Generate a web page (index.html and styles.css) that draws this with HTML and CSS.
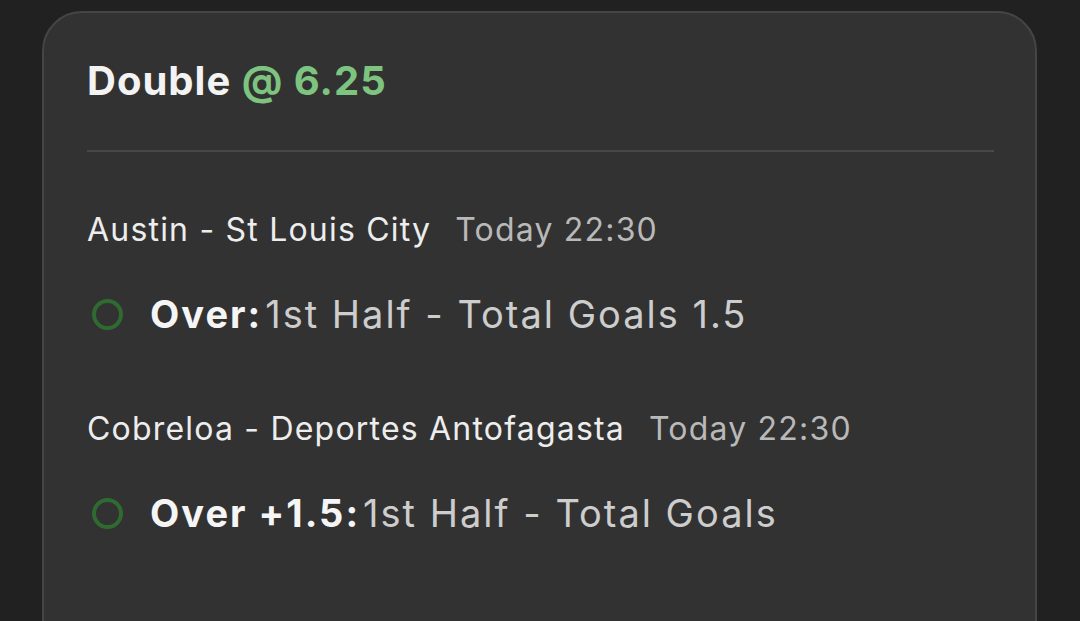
FILE: index.html
```html
<!DOCTYPE html>
<html>
<head>
<meta charset="utf-8">
<link rel="stylesheet" href="styles.css">
</head>
<body>
<div class="card">
  <h1 class="title">Double <span class="odds">@ 6.25</span></h1>
  <div class="divider"></div>
  <div class="leg">
    <div class="match"><span class="teams">Austin - St Louis City</span><span class="time">Today 22:30</span></div>
    <div class="pick"><span class="dot"></span><span class="sel">Over:</span><span class="market">1st Half - Total Goals 1.5</span></div>
  </div>
  <div class="leg">
    <div class="match"><span class="teams">Cobreloa - Deportes Antofagasta</span><span class="time">Today 22:30</span></div>
    <div class="pick"><span class="dot"></span><span class="sel">Over +1.5:</span><span class="market">1st Half - Total Goals</span></div>
  </div>
</div>
</body>
</html>
```
FILE: styles.css
```css
html, body {
  margin: 0;
  background: #212121;
  font-family: Inter, "Noto Sans", sans-serif;
}
body {
  padding: 11px 0 0 42px;
  overflow: hidden;
}
.card {
  width: 995px;
  height: 700px;
  box-sizing: border-box;
  background: #323232;
  border: 2px solid #454545;
  border-radius: 40px;
  padding: 44px 41px 0 43px;
}
.title {
  margin: 0;
  font-size: 40px;
  line-height: 48px;
  font-weight: 700;
  letter-spacing: 1px;
  color: #f3f3f3;
}
.odds {
  color: #7cc47f;
}
.divider {
  height: 2px;
  background: #484848;
  margin-top: 45px;
}
.leg {
  display: flex;
  flex-direction: column;
}
.match {
  display: flex;
  gap: 24px;
  font-size: 32px;
  line-height: 36px;
  letter-spacing: 1.2px;
  margin-top: 60px;
}
.leg + .leg .match {
  margin-top: 75px;
}
.teams {
  color: #ededed;
}
.time {
  color: #b9b9b9;
  letter-spacing: 1.2px;
}
.pick {
  display: flex;
  align-items: center;
  margin-top: 44px;
  font-size: 38px;
  line-height: 44px;
  letter-spacing: 2px;
}
.dot {
  width: 31px;
  height: 31px;
  box-sizing: border-box;
  border: 4.5px solid #2f6b30;
  border-radius: 50%;
  margin: 0 27px 0 5px;
  flex: none;
}
.sel {
  font-weight: 700;
  color: #f5f5f5;
  margin-right: 3px;
}
.market {
  color: #cdcdcd;
}
```
